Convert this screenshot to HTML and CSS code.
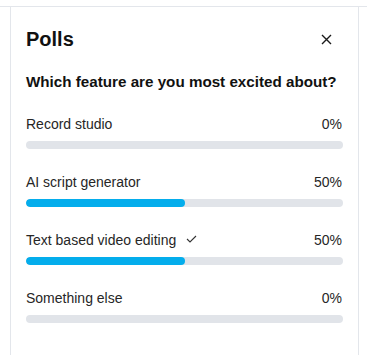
FILE: index.html
```html
<!DOCTYPE html>
<html lang="en">
<head>
    <meta charset="UTF-8">
    <meta name="viewport" content="width=device-width, initial-scale=1.0">
    <title>Polls</title>
    <link rel="stylesheet" href="styles.css">
</head>
<body>

    <div class="topbar"></div>

    <div class="panel">

        <div class="panel-head">
            <h2 class="titulo">Polls</h2>
            <button class="cerrar" aria-label="Close">
                <svg width="11" height="11" viewBox="0 0 11 11">
                    <path d="M1 1 L10 10 M10 1 L1 10" stroke="#1a1a1a" stroke-width="1.4" fill="none"/>
                </svg>
            </button>
        </div>

        <p class="pregunta">Which feature are you most excited about?</p>

        <!-- opciones de la encuesta -->
        <div class="opcion">
            <div class="opcion-linea">
                <span class="nombre">Record studio</span>
                <span class="porcentaje">0%</span>
            </div>
            <div class="barra"><div class="relleno" style="width:0%"></div></div>
        </div>

        <div class="opcion">
            <div class="opcion-linea">
                <span class="nombre">AI script generator</span>
                <span class="porcentaje">50%</span>
            </div>
            <div class="barra"><div class="relleno" style="width:50%"></div></div>
        </div>

        <div class="opcion">
            <div class="opcion-linea">
                <span class="nombre">Text based video editing
                    <svg class="check" width="11" height="8" viewBox="0 0 11 8">
                        <path d="M1 4 L4 7 L10 1" stroke="#333" stroke-width="1.1" fill="none"/>
                    </svg>
                </span>
                <span class="porcentaje">50%</span>
            </div>
            <div class="barra"><div class="relleno" style="width:50%"></div></div>
        </div>

        <div class="opcion">
            <div class="opcion-linea">
                <span class="nombre">Something else</span>
                <span class="porcentaje">0%</span>
            </div>
            <div class="barra"><div class="relleno" style="width:0%"></div></div>
        </div>

    </div>

</body>
</html>
```

FILE: styles.css
```css
body{
    margin: 0;
    background: #ffffff;
    font-family: "Liberation Sans", Arial, sans-serif;
    color: #1f1f1f;
}

.topbar{
    height: 6px;
    border-bottom: 1px solid #e3e6eb;
}

.panel{
    box-sizing: border-box;
    height: calc(100vh - 7px);
    margin: 0 8px 0 10px;
    border-left: 1px solid #e3e6eb;
    border-right: 1px solid #e3e6eb;
    padding: 20px 15px 0 15px;
}

.panel-head{
    display: flex;
    justify-content: space-between;
    align-items: center;
}

.titulo{
    margin: 0;
    font-size: 20px;
    line-height: 24px;
    font-weight: bold;
    color: #111111;
}

.cerrar{
    background: none;
    border: none;
    padding: 0;
    margin-right: 11px;
    cursor: pointer;
    display: flex;
}

.pregunta{
    margin: 22px 0 25px 0;
    font-size: 15.2px;
    line-height: 18px;
    font-weight: bold;
    color: #111111;
}

.opcion{
    margin-bottom: 25px;
}

.opcion:last-child{
    margin-bottom: 0;
}

.opcion-linea{
    display: flex;
    justify-content: space-between;
    padding-right: 1px;
    font-size: 14px;
    line-height: 16px;
    color: #262626;
}

.check{
    margin-left: 6px;
    vertical-align: 2px;
}

.barra{
    margin-top: 9px;
    height: 8px;
    border-radius: 4px;
    background: #e1e4e9;
    overflow: hidden;
}

.relleno{
    height: 100%;
    border-radius: 4px;
    background: #04adec;
}
```
